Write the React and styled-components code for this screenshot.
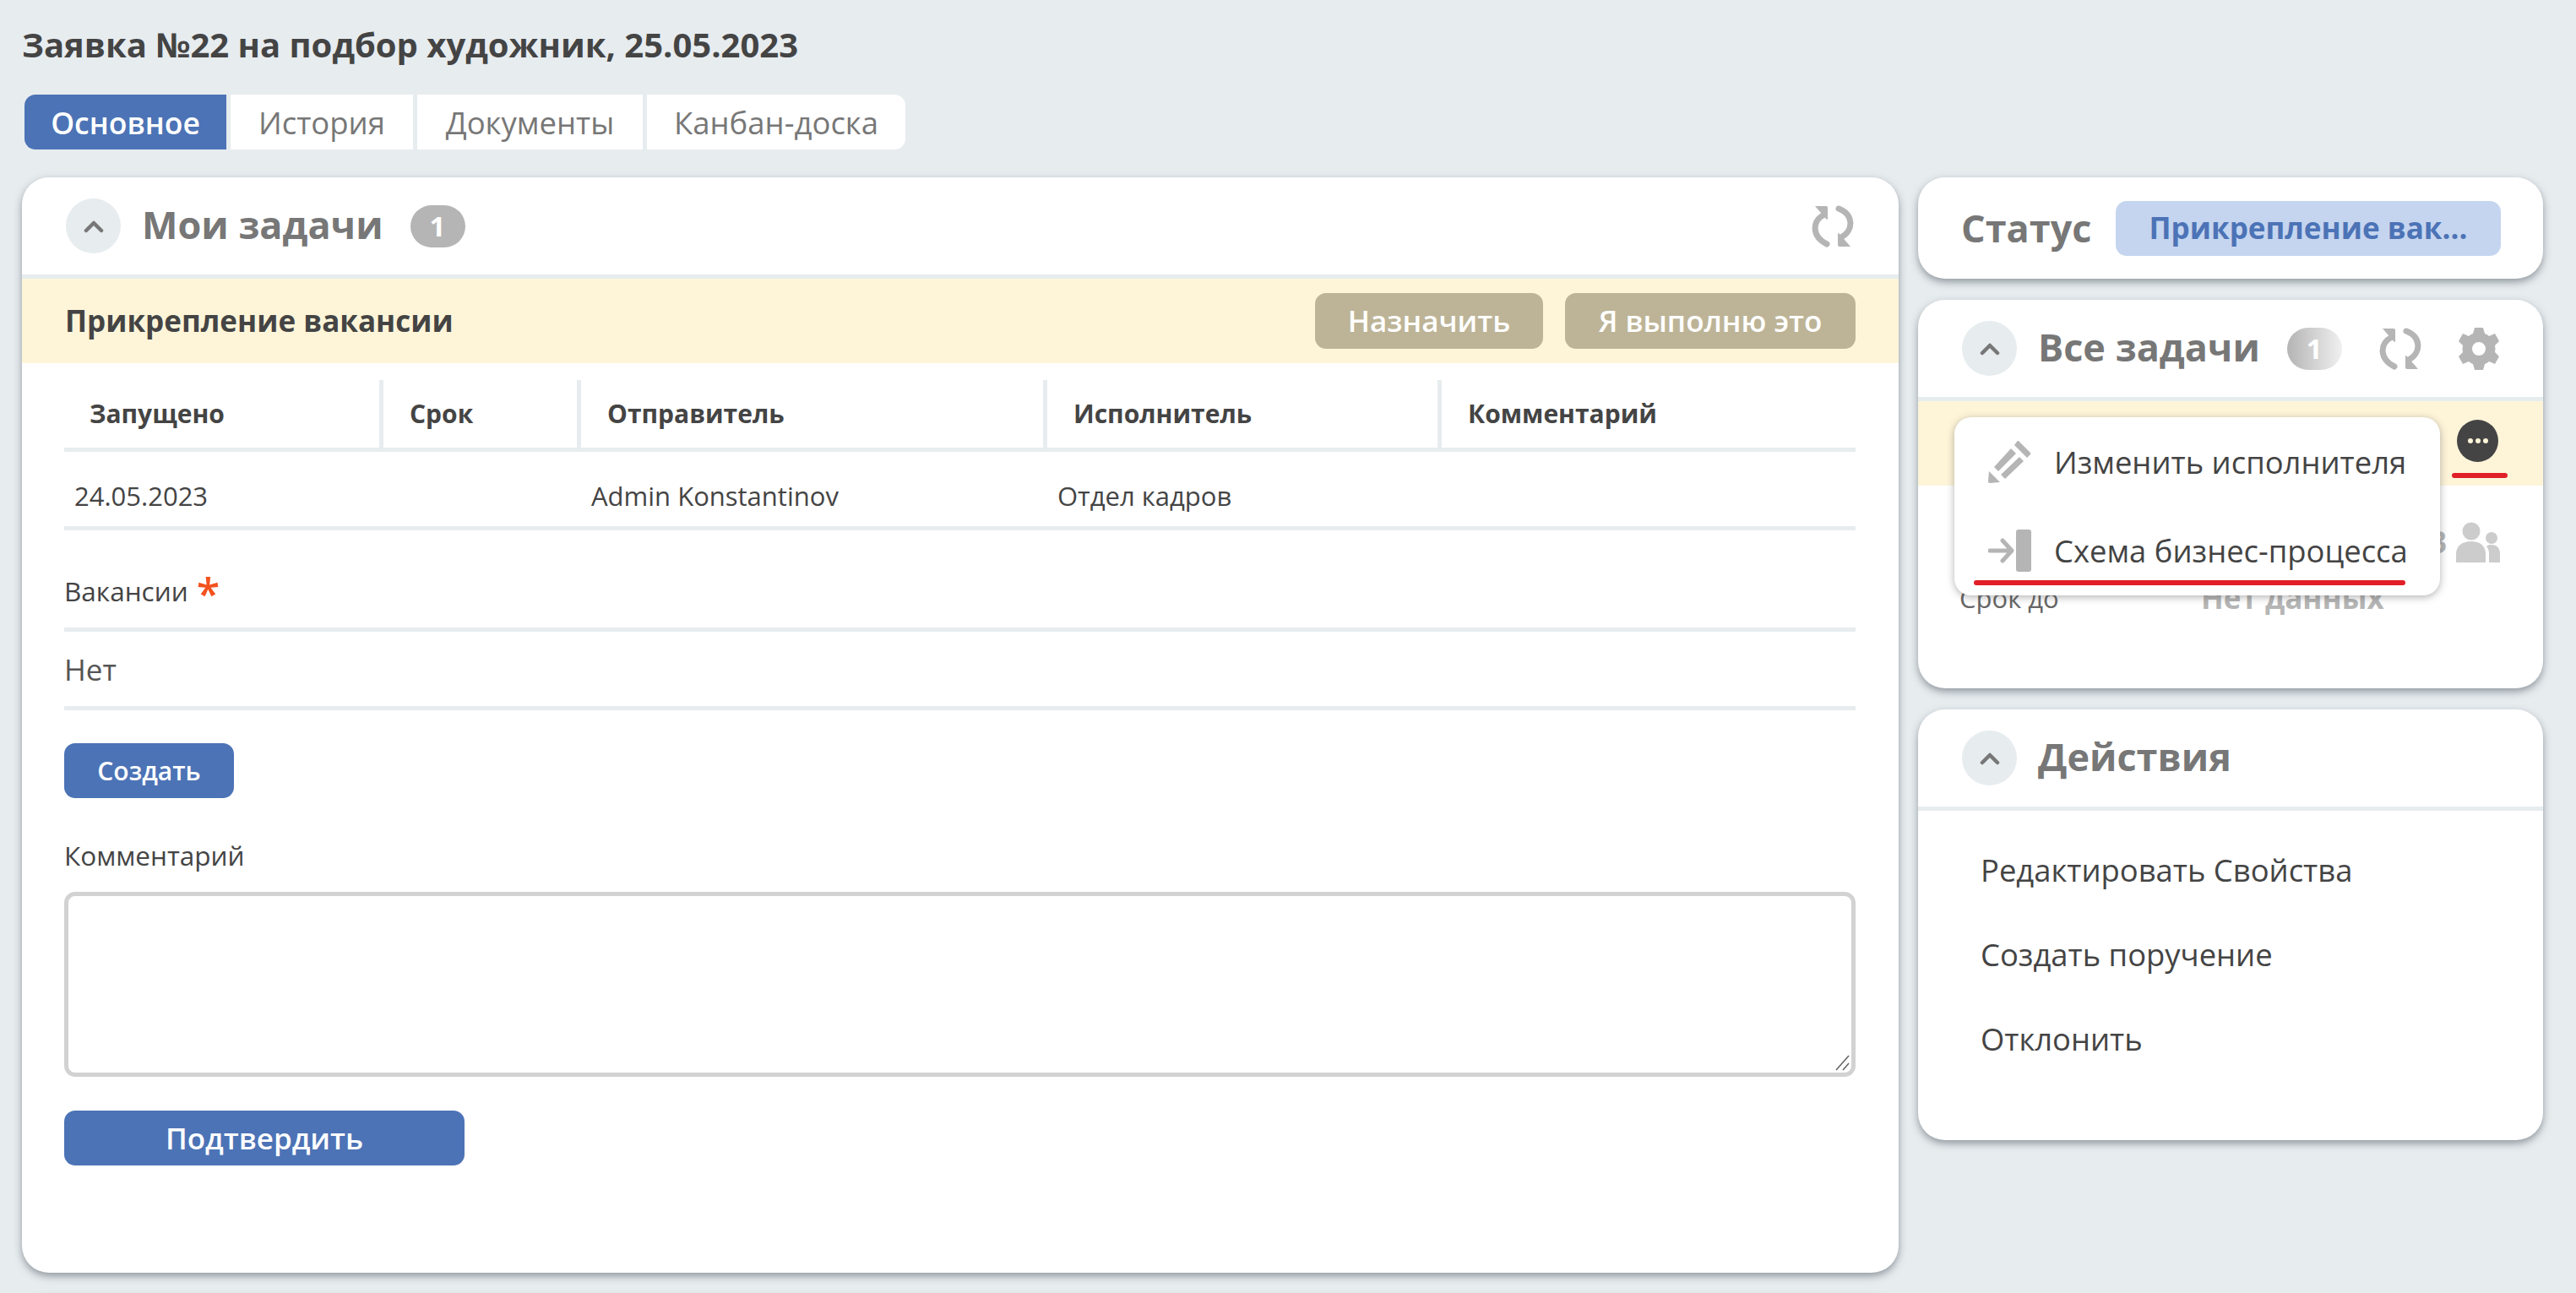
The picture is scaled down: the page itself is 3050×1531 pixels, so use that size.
import React from "react";
import styled, { createGlobalStyle } from "styled-components";

const GlobalStyle = createGlobalStyle`
  * { box-sizing: border-box; }
  html, body { margin: 0; padding: 0; height: 100%; overflow: hidden; }
  body {
    background: #e7ecef;
    font-family: "Open Sans", "Noto Sans", sans-serif;
    color: #444444;
  }
`;

const Page = styled.div`
  width: 3050px;
  height: 1531px;
  overflow: hidden;
  padding: 0 39px 0 26px;
`;

const PageTitle = styled.h1`
  margin: 0;
  height: 112px;
  padding-top: 27px;
  font-size: 40px;
  line-height: 52px;
  font-weight: 700;
  color: #444444;
`;

const Tabs = styled.div`
  display: flex;
  gap: 5px;
  height: 65px;
  margin: 0 0 33px 3px;
  width: max-content;
  border-radius: 13px;
  overflow: hidden;
`;

const Tab = styled.div`
  display: flex;
  align-items: center;
  justify-content: center;
  width: ${(p) => p.$w}px;
  font-size: ${(p) => (p.$active ? 35.5 : 36.5)}px;
  font-weight: ${(p) => (p.$active ? 600 : 400)};
  background: ${(p) => (p.$active ? "#4c73b6" : "#ffffff")};
  color: ${(p) => (p.$active ? "#ffffff" : "#777777")};
`;

const Columns = styled.div`
  display: flex;
  gap: 23px;
  align-items: flex-start;
`;

const Card = styled.section`
  position: relative;
  background: #ffffff;
  border-radius: 32px;
  box-shadow: 0 4px 10px rgba(60, 70, 80, 0.5);
`;

const MainCard = styled(Card)`
  width: 2222px;
  height: 1297px;
  overflow: hidden;
`;

const TailCard = styled(Card)`
  width: 2222px;
  height: 60px;
  margin-top: 27px;
`;

const SideColumn = styled.div`
  width: 740px;
  display: flex;
  flex-direction: column;
  gap: 25px;
`;

const CardHeader = styled.div`
  display: flex;
  align-items: center;
  height: 120px;
  padding: 0 52px 0 52px;
  border-bottom: 5px solid #e7ecef;
`;

const Toggle = styled.span`
  flex: none;
  width: 65px;
  height: 65px;
  border-radius: 50%;
  background: #e7ecef;
  display: flex;
  align-items: center;
  justify-content: center;
`;

const CardTitle = styled.h2`
  margin: 0 0 3px 25px;
  font-size: 45px;
  font-weight: 700;
  line-height: 60px;
  color: #777777;
  white-space: nowrap;
`;

const Count = styled.span`
  flex: none;
  width: 65px;
  height: 50px;
  margin-left: ${(p) => p.$ml}px;
  border-radius: 25px;
  display: flex;
  align-items: center;
  justify-content: center;
  color: #ffffff;
  font-size: 33px;
  font-weight: 700;
  background: ${(p) =>
    p.$fade ? "linear-gradient(90deg, #b4b4b4, #f0f0f0)" : "#b5b5b5"};
`;

const Push = styled.span`
  flex: 1;
`;

const TaskBar = styled.div`
  height: 100px;
  background: #fef5d9;
  padding: 0 51px;
  display: flex;
  align-items: center;
  justify-content: space-between;
`;

const TaskName = styled.div`
  font-size: 35px;
  font-weight: 700;
  margin-bottom: 2px;
  color: #444444;
`;

const BarActions = styled.div`
  display: flex;
  gap: 26px;
`;

const BarButton = styled.div`
  width: ${(p) => p.$w}px;
  height: 66px;
  padding-bottom: 2px;
  border-radius: 13px;
  background: #bdb497;
  color: #ffffff;
  font-size: 35px;
  font-weight: 600;
  display: flex;
  align-items: center;
  justify-content: center;
`;

const Body = styled.div`
  padding: 20px 51px 0 50px;
`;

const TableHead = styled.div`
  display: grid;
  grid-template-columns: 378px 234px 552px 467px 1fr;
  height: 85px;
  border-bottom: 5px solid #e7ecef;
`;

const HeadCell = styled.div`
  padding-left: ${(p) => (p.$first ? 30 : 31)}px;
  padding-bottom: 2px;
  border-right: ${(p) => (p.$last ? "none" : "5px solid #e7ecef")};
  display: flex;
  align-items: center;
  font-size: 30px;
  font-weight: 700;
  color: #444444;
`;

const TableRow = styled.div`
  display: grid;
  grid-template-columns: 375px 234px 552px 467px 1fr;
  height: 93px;
  padding-top: 15px;
  border-bottom: 5px solid #e7ecef;
`;

const Cell = styled.div`
  padding-left: ${(p) => (p.$first ? 12 : 15)}px;
  display: flex;
  align-items: center;
  font-size: 31px;
  color: #444444;
`;

const FieldLabel = styled.div`
  display: flex;
  align-items: center;
  height: ${(p) => p.$h}px;
  padding-top: ${(p) => p.$top}px;
  font-size: 31.5px;
  font-weight: 500;
  color: #444444;
`;

const Required = styled.span`
  margin: 0 0 6px 10px;
  color: #f4511e;
  font-size: 50px;
  line-height: 40px;
  height: 30px;
  font-weight: 600;
`;

const ValueRow = styled.div`
  height: 98px;
  border-top: 5px solid #e7ecef;
  border-bottom: 5px solid #e7ecef;
  display: flex;
  align-items: center;
  font-size: 35px;
  color: #555555;
`;

const BlueButton = styled.div`
  width: ${(p) => p.$w}px;
  height: 65px;
  margin-top: ${(p) => p.$mt}px;
  border-radius: 13px;
  background: #4c73b6;
  color: #ffffff;
  font-size: ${(p) => p.$fs}px;
  font-weight: 600;
  display: flex;
  align-items: center;
  justify-content: center;
`;

const AreaWrap = styled.div`
  position: relative;
  height: 219px;
`;

const CommentArea = styled.textarea`
  display: block;
  width: 100%;
  height: 100%;
  border: 5px solid #d2d2d2;
  border-radius: 13px;
  background: #ffffff;
  resize: none;
  outline: none;
`;

const Grip = styled.svg`
  position: absolute;
  right: 6px;
  bottom: 7px;
`;

const StatusCard = styled(Card)`
  height: 120px;
  padding: 0 50px 0 51px;
  display: flex;
  align-items: center;
  justify-content: space-between;
`;

const StatusLabel = styled.div`
  font-size: 45px;
  font-weight: 700;
  margin-bottom: 2px;
  color: #777777;
`;

const StatusBadge = styled.div`
  width: 456px;
  height: 65px;
  padding-bottom: 2px;
  border-radius: 13px;
  background: #c5d5ef;
  color: #4c73b6;
  font-size: 35px;
  font-weight: 700;
  display: flex;
  align-items: center;
  justify-content: center;
`;

const TasksCard = styled(Card)`
  height: 460px;
`;

const IconSlot = styled.span`
  flex: none;
  display: flex;
  margin-left: ${(p) => p.$ml || 0}px;
`;

const TasksStrip = styled.div`
  height: 100px;
  background: #fef5d9;
  padding: 22px 53px 0 0;
  display: flex;
  justify-content: flex-end;
`;

const DotsButton = styled.span`
  width: 49px;
  height: 50px;
  border-radius: 50%;
  background: #444444;
  display: flex;
  align-items: center;
  justify-content: center;
  gap: 3px;
`;

const Dot = styled.i`
  width: 6px;
  height: 6px;
  border-radius: 50%;
  background: #fef5d9;
`;

const InfoRow = styled.div`
  display: flex;
  align-items: ${(p) => (p.$top ? "flex-start" : "center")};
  height: ${(p) => p.$h}px;
  padding: ${(p) => p.$top || 0}px 51px 0 49px;
`;

const InfoLabel = styled.span`
  width: 286px;
  font-size: 31px;
  color: #666666;
`;

const InfoValue = styled.span`
  font-size: 35px;
  font-weight: 700;
  line-height: 48px;
  color: #b5b5b5;
`;

const Menu = styled.div`
  position: absolute;
  left: 43px;
  top: 139px;
  width: 575px;
  height: 211px;
  background: #ffffff;
  border-radius: 20px;
  box-shadow: 0 2px 10px rgba(60, 60, 60, 0.4);
  padding: 0 0 0 40px;
  display: flex;
  flex-direction: column;
`;

const MenuItem = styled.div`
  height: 106px;
  display: flex;
  align-items: center;
  gap: 27px;
  font-size: 36.4px;
  color: #444444;
  white-space: nowrap;
`;

const RedMark = styled.span`
  position: absolute;
  height: 6px;
  border-radius: 3px;
  background: #e01f26;
  left: ${(p) => p.$l}px;
  top: ${(p) => p.$t}px;
  width: ${(p) => p.$w}px;
`;

const ActionsCard = styled(Card)`
  height: 510px;
`;

const ActionList = styled.div`
  padding: 20px 74px 0;
`;

const ActionItem = styled.div`
  height: 100px;
  display: flex;
  align-items: center;
  font-size: 36.4px;
  color: #444444;
`;

const Chevron = () => (
  <svg width="24" height="16" viewBox="0 0 24 16" fill="none">
    <path d="M3 13 L12 4 L21 13" stroke="#777777" strokeWidth="4.5" strokeLinecap="round" strokeLinejoin="round" />
  </svg>
);

const RefreshIcon = () => (
  <svg width="52" height="50" viewBox="0 0 52 50" fill="none">
    <path d="M16 11 C1 19 1 37 19 46" stroke="#b5b5b5" strokeWidth="7" strokeLinecap="round" />
    <path d="M33 4 C51 11 51 30 36 38" stroke="#b5b5b5" strokeWidth="7" strokeLinecap="round" />
    <path d="M5 1 H18 Q20 1 20 3 V16 Q20 18 18 16 Z" fill="#b5b5b5" />
    <path d="M47 49 H34 Q32 49 32 47 V34 Q32 32 34 34 Z" fill="#b5b5b5" />
  </svg>
);

const GearIcon = () => (
  <svg width="52" height="50" viewBox="0 0 52 50">
    <path
      fill="#b5b5b5"
      fillRule="evenodd"
      d="M21 0 H31 L33 7 Q36 8 38 10 L45 7 L50 16 L45 21 Q46 25 45 29 L50 34 L45 43 L38 40 Q36 42 33 43 L31 50 H21 L19 43 Q16 42 14 40 L7 43 L2 34 L7 29 Q6 25 7 21 L2 16 L7 7 L14 10 Q16 8 19 7 Z M26 17 A8 8 0 1 0 26 33 A8 8 0 1 0 26 17 Z"
    />
  </svg>
);

const PeopleIcon = () => (
  <svg width="52" height="48" viewBox="0 0 52 48" fill="#cccccc">
    <circle cx="18" cy="11" r="10.5" />
    <path d="M0 48 V38 C0 28 8 23 18 23 C28 23 35 28 35 38 V48 Z" />
    <circle cx="42" cy="19" r="7" />
    <path d="M39 48 V38 C39 34 38 31 36 29 C38 27 40 27 42 27 C48 27 52 31 52 37 V48 Z" />
  </svg>
);

const PencilIcon = () => (
  <svg width="51" height="50" viewBox="0 0 51 50" fill="#b5b5b5">
    <path d="M36 0 L50 14 Q51 16 49 17 L46 20 L31 5 L34 1 Q35 -1 36 0 Z" />
    <path d="M27 9 L33 15 L12 36 L7 31 Z" />
    <path d="M37 19 L42 24 L20 45 L15 40 Z" />
    <path d="M1 36 L14 49 L2 50 Q0 50 0 48 Z" />
  </svg>
);

const ExitIcon = () => (
  <svg width="51" height="50" viewBox="0 0 51 50" fill="none">
    <rect x="33" y="0" width="18" height="50" rx="3" fill="#b5b5b5" />
    <path d="M2 25 H27 M17 13 L28 25 L17 37" stroke="#b5b5b5" strokeWidth="5" strokeLinecap="round" strokeLinejoin="round" />
  </svg>
);

const columns = [
  { title: "Запущено", value: "24.05.2023" },
  { title: "Срок", value: "" },
  { title: "Отправитель", value: "Admin Konstantinov" },
  { title: "Исполнитель", value: "Отдел кадров" },
  { title: "Комментарий", value: "" },
];

const tabs = [
  { label: "Основное", w: 239, active: true },
  { label: "История", w: 216 },
  { label: "Документы", w: 267 },
  { label: "Канбан-доска", w: 306 },
];

export default function App() {
  return (
    <Page>
      <GlobalStyle />
      <PageTitle>Заявка №22 на подбор художник, 25.05.2023</PageTitle>

      <Tabs>
        {tabs.map((tab) => (
          <Tab key={tab.label} $w={tab.w} $active={tab.active}>
            {tab.label}
          </Tab>
        ))}
      </Tabs>

      <Columns>
        <div>
          <MainCard>
            <CardHeader>
              <Toggle>
                <Chevron />
              </Toggle>
              <CardTitle>Мои задачи</CardTitle>
              <Count $ml={32}>1</Count>
              <Push />
              <RefreshIcon />
            </CardHeader>

            <TaskBar>
              <TaskName>Прикрепление вакансии</TaskName>
              <BarActions>
                <BarButton $w={270}>Назначить</BarButton>
                <BarButton $w={344}>Я выполню это</BarButton>
              </BarActions>
            </TaskBar>

            <Body>
              <TableHead>
                {columns.map((col, i) => (
                  <HeadCell key={col.title} $first={i === 0} $last={i === columns.length - 1}>
                    {col.title}
                  </HeadCell>
                ))}
              </TableHead>
              <TableRow>
                {columns.map((col, i) => (
                  <Cell key={col.title} $first={i === 0}>
                    {col.value}
                  </Cell>
                ))}
              </TableRow>

              <FieldLabel $h={115} $top={28}>
                Вакансии <Required>*</Required>
              </FieldLabel>
              <ValueRow>Нет</ValueRow>
              <BlueButton $w={201} $mt={39} $fs={30}>
                Создать
              </BlueButton>

              <FieldLabel $h={111} $top={24}>
                Комментарий
              </FieldLabel>
              <AreaWrap>
                <CommentArea />
                <Grip width="20" height="20" viewBox="0 0 20 20" fill="none">
                  <path d="M3 19 L18 2 M11 19 L18 11" stroke="#666666" strokeWidth="1.6" />
                </Grip>
              </AreaWrap>
              <BlueButton $w={474} $mt={40} $fs={35}>
                Подтвердить
              </BlueButton>
            </Body>
          </MainCard>
          <TailCard />
        </div>

        <SideColumn>
          <StatusCard>
            <StatusLabel>Статус</StatusLabel>
            <StatusBadge>Прикрепление вак...</StatusBadge>
          </StatusCard>

          <TasksCard>
            <CardHeader>
              <Toggle>
                <Chevron />
              </Toggle>
              <CardTitle>Все задачи</CardTitle>
              <Count $fade $ml={32}>
                1
              </Count>
              <IconSlot $ml={43}>
                <RefreshIcon />
              </IconSlot>
              <IconSlot $ml={41}>
                <GearIcon />
              </IconSlot>
            </CardHeader>
            <TasksStrip>
              <DotsButton>
                <Dot />
                <Dot />
                <Dot />
              </DotsButton>
            </TasksStrip>
            <InfoRow $h={105} $top={43}>
              <Push />
              <InfoValue>3</InfoValue>
              <IconSlot $ml={11}>
                <PeopleIcon />
              </IconSlot>
            </InfoRow>
            <InfoRow $h={56}>
              <InfoLabel>Срок до</InfoLabel>
              <InfoValue>Нет данных</InfoValue>
            </InfoRow>

            <Menu>
              <MenuItem>
                <PencilIcon />
                Изменить исполнителя
              </MenuItem>
              <MenuItem>
                <ExitIcon />
                Схема бизнес-процесса
              </MenuItem>
              <RedMark $l={23} $t={193} $w={511} />
            </Menu>
            <RedMark $l={632} $t={205} $w={66} />
          </TasksCard>

          <ActionsCard>
            <CardHeader>
              <Toggle>
                <Chevron />
              </Toggle>
              <CardTitle>Действия</CardTitle>
            </CardHeader>
            <ActionList>
              <ActionItem>Редактировать Свойства</ActionItem>
              <ActionItem>Создать поручение</ActionItem>
              <ActionItem>Отклонить</ActionItem>
            </ActionList>
          </ActionsCard>
        </SideColumn>
      </Columns>
    </Page>
  );
}
